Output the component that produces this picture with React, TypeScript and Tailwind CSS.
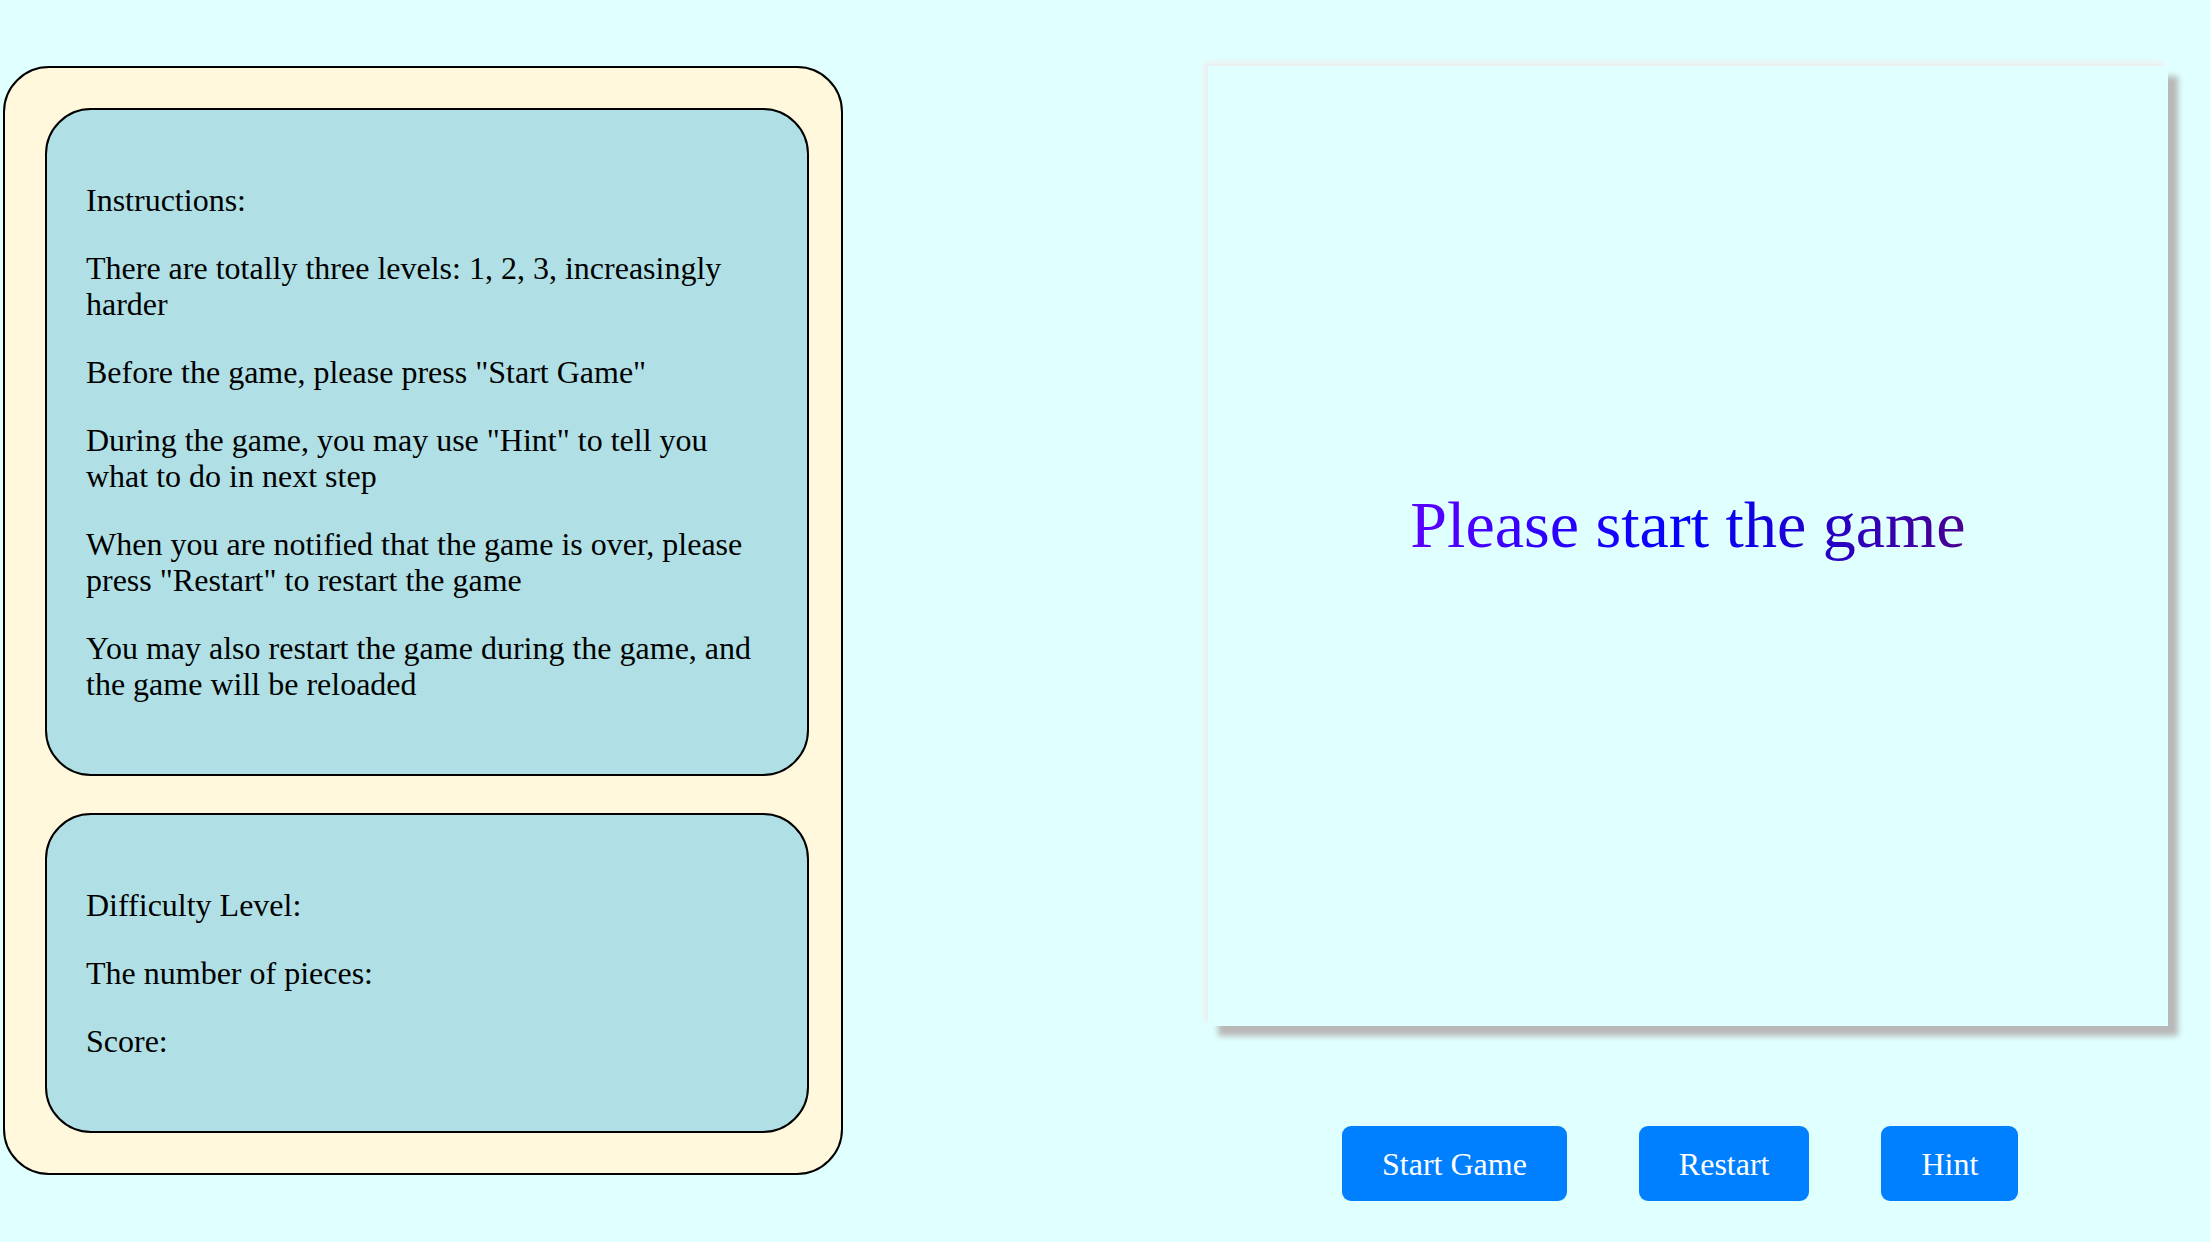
import React from 'react';

const serif = { fontFamily: '"Liberation Serif", "Times New Roman", serif' };

export default function App() {
      const instructions = [
            'Instructions:',
            'There are totally three levels: 1, 2, 3, increasingly harder',
            'Before the game, please press "Start Game"',
            'During the game, you may use "Hint" to tell you what to do in next step',
            'When you are notified that the game is over, please press "Restart" to restart the game',
            'You may also restart the game during the game, and the game will be reloaded',
      ];
      const status = ['Difficulty Level:', 'The number of pieces:', 'Score:'];

      return (
            <div
                  className="min-h-screen w-full bg-[#E0FFFF] flex items-start pt-[66px] pl-[3px] text-black"
                  style={serif}
            >
                  <div className="w-[840px] shrink-0 rounded-[46px] border-2 border-black bg-[#FFF8DC] p-[40px] flex flex-col gap-[37px]">
                        <div className="w-[764px] rounded-[46px] border-2 border-black bg-[#B0E0E6] px-[39px] py-[40px] text-[32px] leading-[36px]">
                              {instructions.map((line) => (
                                    <p key={line} className="my-[32px]">
                                          {line}
                                    </p>
                              ))}
                        </div>
                        <div className="w-[764px] rounded-[46px] border-2 border-black bg-[#B0E0E6] px-[39px] py-[40px] text-[32px] leading-[36px]">
                              {status.map((line) => (
                                    <p key={line} className="my-[32px]">
                                          {line}
                                    </p>
                              ))}
                        </div>
                  </div>

                  <div className="ml-[365px] flex flex-col">
                        <div className="w-[960px] h-[960px] bg-[#E0FFFF] shadow-[10px_10px_6px_#b8b8b8,-4px_-4px_5px_#eeeeee] flex items-center justify-center">
                              <h1
                                    className="mb-[44px] text-[66px] leading-normal bg-[linear-gradient(to_right,#5c00ff,#0000ff_50%,#4b0090)] bg-clip-text text-transparent"
                                    style={serif}
                              >
                                    Please start the game
                              </h1>
                        </div>

                        <div className="mt-[100px] flex gap-[72px] pl-[134px]">
                              <button className="h-[75px] px-[40px] rounded-[9px] bg-[#0080FF] text-white text-[32px] leading-none">
                                    Start Game
                              </button>
                              <button className="h-[75px] px-[40px] rounded-[9px] bg-[#0080FF] text-white text-[32px] leading-none">
                                    Restart
                              </button>
                              <button className="h-[75px] px-[40px] rounded-[9px] bg-[#0080FF] text-white text-[32px] leading-none">
                                    Hint
                              </button>
                        </div>
                  </div>
            </div>
      );
}
